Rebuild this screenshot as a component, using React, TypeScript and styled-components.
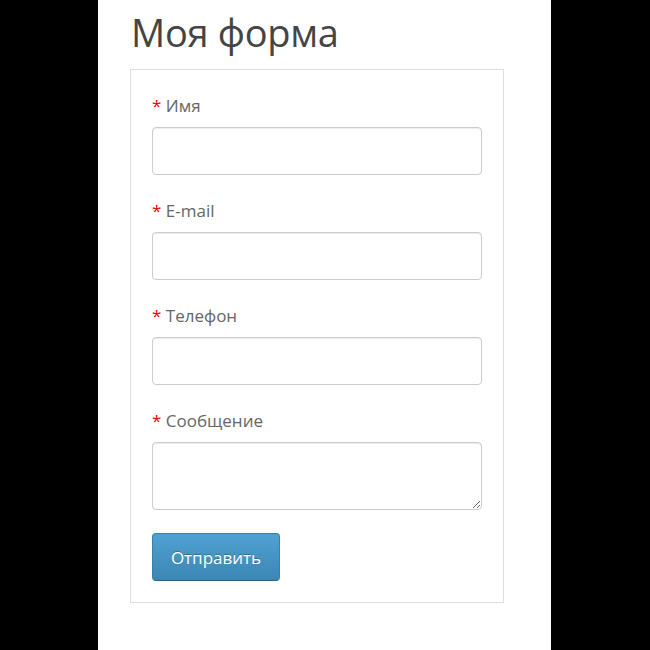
import React from 'react';
import styled, { createGlobalStyle } from 'styled-components';

const GlobalStyle = createGlobalStyle`
  html, body {
    margin: 0;
    padding: 0;
    background: #000;
  }
  body {
    font-family: "Open Sans", "Liberation Sans", Arial, sans-serif;
  }
`;

type Field = {
  id: string;
  label: string;
  multiline?: boolean;
};

const fields: Field[] = [
  { id: 'name', label: 'Имя' },
  { id: 'email', label: 'E-mail' },
  { id: 'phone', label: 'Телефон' },
  { id: 'message', label: 'Сообщение', multiline: true },
];

const App = () => {
  return (
    <>
      <GlobalStyle />
      <PageStyled className="page">
        <ColumnStyled className="page__column">
          <TitleStyled>Моя форма</TitleStyled>
          <FormBoxStyled className="form" onSubmit={(e) => e.preventDefault()}>
            {fields.map((field) => (
              <GroupStyled key={field.id} className="form__group">
                <LabelStyled htmlFor={field.id}>
                  <RequiredStyled>*</RequiredStyled> {field.label}
                </LabelStyled>
                {field.multiline ? (
                  <TextAreaStyled id={field.id} />
                ) : (
                  <InputStyled id={field.id} type="text" />
                )}
              </GroupStyled>
            ))}
            <ButtonStyled type="submit">Отправить</ButtonStyled>
          </FormBoxStyled>
        </ColumnStyled>
      </PageStyled>
    </>
  );
};

export default App;

const PageStyled = styled.div`
  width: 650px;
  height: 650px;
  display: flex;
  justify-content: flex-start;
  padding-left: 98px;
  box-sizing: border-box;
  background: #000;
`;

const ColumnStyled = styled.div`
  width: 453px;
  height: 100%;
  background: #fff;
  padding: 12px 0 0 32px;
  box-sizing: border-box;
`;

const TitleStyled = styled.h1`
  margin: 0 0 17px;
  padding-left: 1px;
  font-size: 38px;
  line-height: 40px;
  letter-spacing: -0.3px;
  font-weight: 400;
  color: #444;
`;

const FormBoxStyled = styled.form`
  width: 374px;
  box-sizing: border-box;
  border: 1px solid #ddd;
  padding: 24px 21px 21px;
  display: flex;
  flex-direction: column;
  align-items: flex-start;
`;

const GroupStyled = styled.div`
  width: 100%;
  display: flex;
  flex-direction: column;
  margin-bottom: 24px;
`;

const LabelStyled = styled.label`
  margin-top: 1px;
  font-size: 17px;
  line-height: 22px;
  color: #666;
  margin-bottom: 10px;
`;

const RequiredStyled = styled.span`
  color: #f00;
`;

const InputStyled = styled.input`
  width: 100%;
  height: 48px;
  box-sizing: border-box;
  border: 1px solid #ccc;
  border-radius: 4px;
  box-shadow: inset 0 1px 1px rgba(0, 0, 0, 0.075);
  background: #fff;
  padding: 6px 12px;
  font-family: inherit;
  font-size: 14px;
  outline: none;
`;

const TextAreaStyled = styled.textarea`
  width: 100%;
  height: 68px;
  box-sizing: border-box;
  border: 1px solid #ccc;
  border-radius: 4px;
  box-shadow: inset 0 1px 1px rgba(0, 0, 0, 0.075);
  background: #fff;
  padding: 6px 12px;
  font-family: inherit;
  font-size: 14px;
  outline: none;
  display: block;
`;

const ButtonStyled = styled.button`
  margin-top: -1px;
  width: 128px;
  height: 48px;
  border: 1px solid #3a7fa8;
  border-bottom-color: #2c6587;
  border-radius: 4px;
  background: linear-gradient(to bottom, #4ea2d2, #3c86b3);
  color: #fff;
  font-family: inherit;
  font-size: 17px;
  text-shadow: 0 -1px 0 rgba(0, 0, 0, 0.25);
  cursor: pointer;
  padding: 0;
`;
